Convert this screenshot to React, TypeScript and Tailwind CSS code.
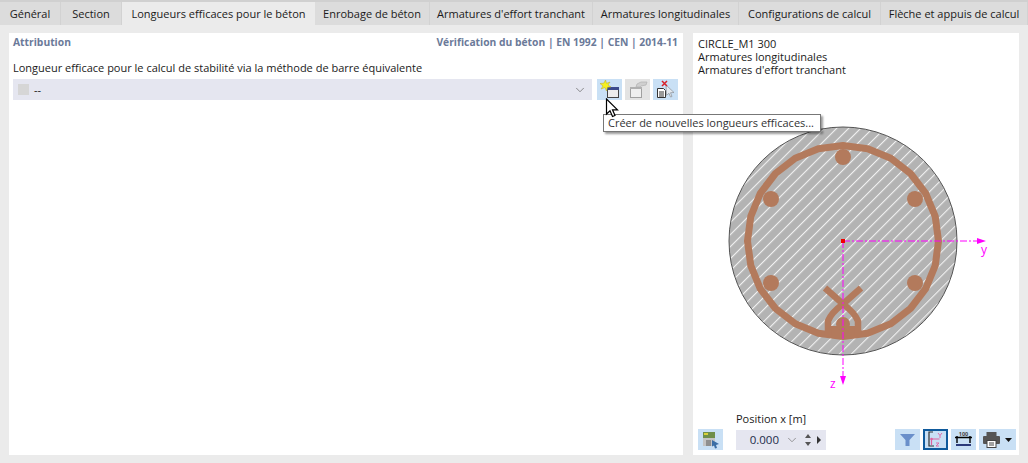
import type { ReactNode } from 'react'
import { ChevronDown } from 'lucide-react'

const tabs = [
  { label: 'Général', width: 'w-[61px]' },
  { label: 'Section', width: 'w-[61px]' },
  { label: 'Longueurs efficaces pour le béton', width: 'w-[193px]', active: true },
  { label: 'Enrobage de béton', width: 'w-[115px]' },
  { label: "Armatures d'effort tranchant", width: 'w-[163px]' },
  { label: 'Armatures longitudinales', width: 'w-[146px]' },
  { label: 'Configurations de calcul', width: 'w-[142px]' },
  { label: 'Flèche et appuis de calcul', width: 'w-[147px]' },
]

// points of the closed stirrup, as a polygon round the section centre
const ringPoints = Array.from({ length: 24 }, (_, i) => {
  const a = (i / 24) * Math.PI * 2
  return `${(120 + 95.5 * Math.sin(a)).toFixed(1)},${(120 - 95.5 * Math.cos(a)).toFixed(1)}`
}).join(' ')

function NewIcon() {
  return (
    <svg width="20" height="19" viewBox="0 0 20 19">
      <rect x="7.500" y="7.500" width="11" height="10" fill="#ececec" stroke="#444" />
      <rect x="7" y="7" width="12" height="3" fill="#3b4a8c" />
      <path d="M5.500 0l1 3.300L10 2 8 5l3 2-3.500.2L6.500 11 5 7.500 1 9l2-3L0 3.500l3.800-.3z" fill="#f6f01e" stroke="#b8a92a" strokeWidth="0.5" />
    </svg>
  )
}

function CopyIcon() {
  return (
    <svg width="20" height="19" viewBox="0 0 20 19">
      <rect x="2.500" y="7.500" width="11" height="10" fill="#efefef" stroke="#a0a0a0" />
      <rect x="2" y="7" width="12" height="2" fill="#b0b0b0" />
      <path d="M8 7l1-3 4-2 6 0-1 3-5 1-1 1z" fill="#cfcfcf" stroke="#b0b0b0" strokeWidth="0.7" />
    </svg>
  )
}

function DeleteIcon() {
  return (
    <svg width="20" height="19" viewBox="0 0 20 19">
      <path d="M1.500 8.500h6l2 2v7h-8z" fill="#fff" stroke="#333" />
      <path d="M3 12h5M3 14h5M3 16h5" stroke="#333" />
      <path d="M10 5l8 7.500-3.500.2 1.500 3.800-1.500.5-1.500-3.700-2.500 2z" fill="#e3e9f0" stroke="#8a8f96" strokeWidth="0.7" />
      <path d="M6 1l5 5M11 1L6 6" stroke="#d8232a" strokeWidth="1.500" />
    </svg>
  )
}

function Cursor() {
  return (
    <svg width="14" height="20" viewBox="0 0 14 20">
      <path d="M1.500 1v15l3.500-3.300 2.500 5.800 2.500-1-2.500-5.700h5z" fill="#fff" stroke="#000" strokeWidth="1.200" />
    </svg>
  )
}

function SectionDrawing() {
  const steel = '#b37a5c'
  const axis = '#ff00ff'
  return (
    <svg width="290" height="280" viewBox="0 0 290 280" className="block">
      <defs>
        <pattern id="hatch" width="8.500" height="8.500" patternUnits="userSpaceOnUse" patternTransform="rotate(45)">
          <rect width="8.500" height="8.500" fill="#b3b3b3" />
          <rect width="1.100" height="8.500" fill="#f0f0f0" />
        </pattern>
      </defs>
      <circle cx="120" cy="120" r="114" fill="url(#hatch)" stroke="#555" strokeWidth="1" />
      <polygon points={ringPoints} fill="none" stroke={steel} strokeWidth="7" strokeLinejoin="round" />
      <g fill={steel}>
        <circle cx="120" cy="36" r="8" />
        <circle cx="48" cy="78" r="8" />
        <circle cx="192" cy="78" r="8" />
        <circle cx="48" cy="162" r="8" />
        <circle cx="192" cy="162" r="8" />
      </g>
      {/* Hooks of the stirrup */}
      <path d="M103 205h34v10h-34z" fill={steel} />
      <path
        d="M102 167 L120 183 Q132 192 135 200 L135 214 M138 167 L120 183 Q108 192 105 200 L105 214"
        fill="none"
        stroke={steel}
        strokeWidth="6.500"
      />
      <circle cx="120" cy="203" r="7" fill={steel} />
      <path d="M120 120 V256 M120 120 H256" stroke={axis} strokeWidth="1" strokeDasharray="7 2 2 2" fill="none" />
      <path d="M254 117 L263 120 L254 123 Z M117 255 L120 264 L123 255 Z" fill={axis} />
      <rect x="118" y="118" width="4" height="4" fill="#f00000" />
    </svg>
  )
}

function ToolButton({ children, className }: { children: ReactNode; className: string }) {
  return <div className={`flex items-center justify-center h-[21px] ${className}`}>{children}</div>
}

export default function App() {
  return (
    <div
      className="relative w-[1028px] h-[463px] overflow-hidden bg-[#ebebeb] text-[11px] leading-[16px] text-[#1a1a1a]"
      style={{ fontFamily: '"Open Sans", "Noto Sans", sans-serif' }}
    >
      {/* Tabs */}
      <div className="flex h-[25px] bg-[#dcdcdc] border-t-2 border-[#d0d0d0] box-border">
        {tabs.map((tab) => (
          <div
            key={tab.label}
            className={`shrink-0 flex items-center justify-center whitespace-nowrap ${tab.width} ${
              tab.active ? 'bg-[#ebebeb]' : 'border-r border-[#d2d2d2]'
            }`}
          >
            {tab.label}
          </div>
        ))}
      </div>

      {/* Main Content */}
      <div className="flex gap-[10px] px-[9px] pt-[8px] h-[430px]">
        <div className="w-[674px] h-[422px] bg-white flex flex-col">
          <div className="flex justify-between pl-[4px] pr-[5px] pt-[1px] font-bold text-[#6b7a99] text-[10.300px]">
            <span>Attribution</span>
            <span>Vérification du béton | EN 1992 | CEN | 2014-11</span>
          </div>
          <div className="pl-[4px] mt-[10px]">Longueur efficace pour le calcul de stabilité via la méthode de barre équivalente</div>
          <div className="flex items-center gap-[3px] pl-[4px] pr-[5px] mt-[3px]">
            <div className="flex items-center flex-1 h-[21px] bg-[#e5e6f0] pl-[5px] pr-[5px] mr-[2px]">
              <span className="w-[11px] h-[11px] bg-[#d6d6d6] mr-[5px]" />
              <span className="flex-1">--</span>
              <ChevronDown size={14} className="text-[#666]" strokeWidth={1.250} />
            </div>
            <ToolButton className="w-[25px] bg-[#c9e0f5]"><NewIcon /></ToolButton>
            <ToolButton className="w-[25px] bg-[#e3e3e3]"><CopyIcon /></ToolButton>
            <ToolButton className="w-[25px] bg-[#c9e0f5]"><DeleteIcon /></ToolButton>
          </div>
        </div>

        <div className="w-[326px] h-[422px] bg-white flex flex-col">
          <div className="pl-[5px] pt-[4px] leading-[13px]">
            <div>CIRCLE_M1 300</div>
            <div>Armatures longitudinales</div>
            <div>Armatures d'effort tranchant</div>
          </div>
          <div className="pl-[30px] mt-[45px] h-[280px]">
            <SectionDrawing />
          </div>
          <div className="flex items-end flex-1 pl-[5px] pr-[3px] pb-[5px]">
            <ToolButton className="w-[25px] bg-[#c9e0f5]">
              <svg width="18" height="18" viewBox="0 0 18 18">
                <rect x="1" y="1" width="12" height="6" fill="#6f8f4a" />
                <rect x="2" y="2" width="4" height="2" fill="#d9d23a" />
                <rect x="1" y="7" width="12" height="8" fill="#c4c4c4" />
                <rect x="4" y="9" width="5" height="6" fill="#8f8f8f" />
                <path d="M10 9l7 4-3 1 1 3-2 .5-1-3-2 1z" fill="#3b6ea5" />
              </svg>
            </ToolButton>
            <div className="ml-[13px] flex flex-col">
              <span className="leading-[14px] mb-[4px]">Position x [m]</span>
              <div className="flex items-center w-[90px] h-[20px] bg-[#e5e6f0]">
                <span className="w-[43px] text-right text-[11.500px] text-[#1c2b4a]">0.000</span>
                <ChevronDown size={14} className="ml-[6px] text-[#777]" strokeWidth={1.250} />
                <svg width="8" height="14" viewBox="0 0 8 14" className="ml-[5px]">
                  <path d="M4 1l3 4H1zM4 13L1 9h6z" fill="#555" />
                </svg>
                <svg width="6" height="10" viewBox="0 0 6 10" className="ml-[4px]">
                  <path d="M1 1l4 4-4 4z" fill="#333" />
                </svg>
              </div>
            </div>
            <div className="flex gap-[3px] ml-auto">
              <ToolButton className="w-[25px] bg-[#c9e0f5]">
                <svg width="15" height="14" viewBox="0 0 15 14"><path d="M0 1h15L9.500 7v6h-4V7z" fill="#6a8fca" /></svg>
              </ToolButton>
              <ToolButton className="w-[25px] bg-[#c9e0f5] border-2 border-[#0f5a9c]">
                <svg width="17" height="17" viewBox="0 0 17 17">
                  <path d="M6 1H2v14h5" fill="none" stroke="#333" strokeWidth="1.200" />
                  <path d="M4.500 8h8M4.500 8v6" stroke="#e060a0" strokeWidth="1.200" />
                  <circle cx="4.500" cy="8" r="1.300" fill="#e060a0" />
                  <path d="M11 2l2 2.500L15 2M13 4.500V7M9 12h3l-3 3h3" fill="none" stroke="#e060a0" strokeWidth="0.900" />
                </svg>
              </ToolButton>
              <ToolButton className="w-[25px] bg-[#c9e0f5]">
                <svg width="19" height="17" viewBox="0 0 19 17">
                  <path d="M3 5v7M16 5v7M1 6.500h17" stroke="#000" strokeWidth="1.400" />
                  <rect x="2" y="13" width="15" height="2" fill="#2b3a7a" />
                  <text x="9.500" y="4.500" textAnchor="middle" fontSize="5.500" fontWeight="700" fill="#444">100</text>
                </svg>
              </ToolButton>
              <ToolButton className="w-[37px] bg-[#c9e0f5] gap-[5px]">
                <svg width="17" height="16" viewBox="0 0 17 16">
                  <rect x="3.500" y="0" width="10" height="4" fill="#555" />
                  <rect x="0" y="4" width="17" height="8" rx="1" fill="#555" />
                  <rect x="4" y="8.500" width="9" height="7" fill="#fff" stroke="#444" />
                  <path d="M6 11h5M6 13h5" stroke="#444" />
                </svg>
                <svg width="7" height="4" viewBox="0 0 7 4"><path d="M0 0h7L3.500 4z" fill="#111" /></svg>
              </ToolButton>
            </div>
          </div>
        </div>
      </div>

      {/* Tooltip */}
      <div className="absolute left-[603px] top-[114px] w-[218px] h-[18px] bg-white border border-[#777] shadow-[2px_2px_2px_rgba(0,0,0,0.4)] pl-[4px] leading-[16px] whitespace-nowrap text-[#333]">
        Créer de nouvelles longueurs efficaces...
      </div>
      <div className="absolute left-[605px] top-[98px]">
        <Cursor />
      </div>
      {/* Axis labels */}
      <span className="absolute left-[981px] top-[242px] text-[12px] text-[#ff00ff]">y</span>
      <span className="absolute left-[830px] top-[376px] text-[12px] text-[#ff00ff]">z</span>
    </div>
  )
}
